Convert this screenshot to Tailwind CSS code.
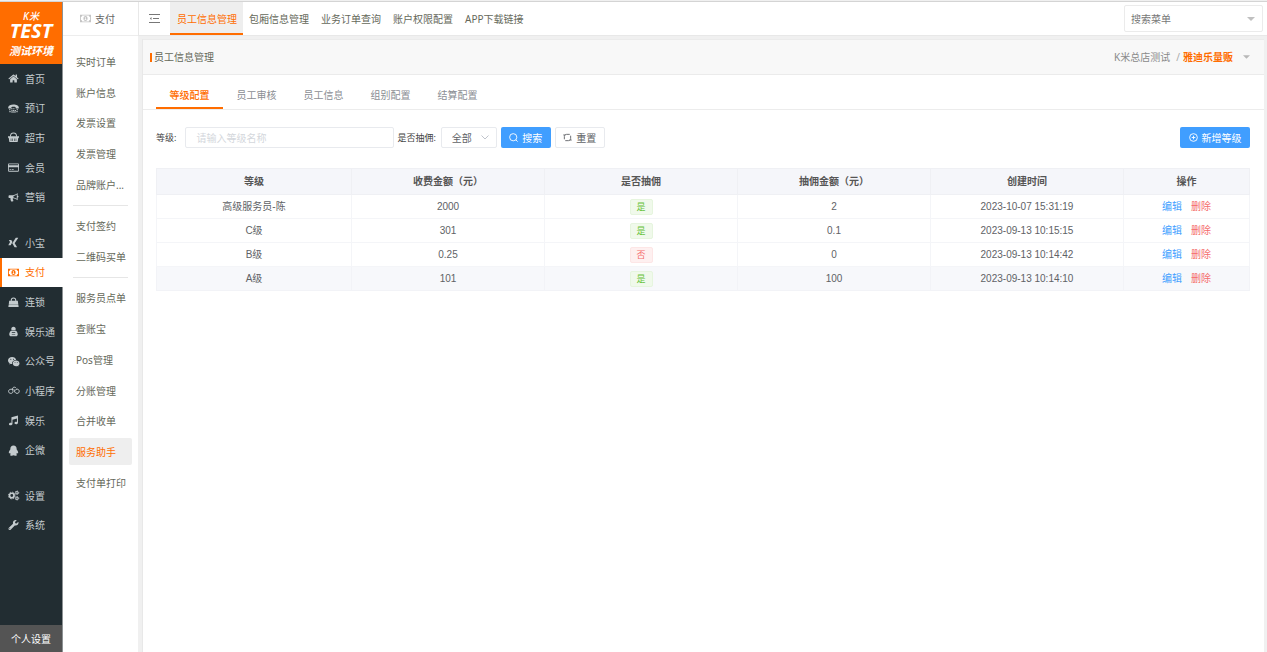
<!DOCTYPE html>
<html lang="zh-CN">
<head>
<meta charset="utf-8">
<meta name="viewport" content="width=device-width, initial-scale=1">
<title>员工信息管理</title>
<script src="https://cdn.jsdelivr.net/npm/@tailwindcss/browser@4"></script>
</head>
<body class="flex min-h-screen flex-col bg-[#f0f0f0] pt-px font-['Noto_Sans','Noto_Sans_CJK_SC',sans-serif] text-[10px] leading-4 text-[#606266]">
<div class="flex flex-1 border-t border-[#d4d4d4]">

  <!-- Primary navigation -->
  <aside class="flex w-[63px] shrink-0 flex-col border-r border-[#8d9294] bg-[#222d32] text-[#c4cbce]">
    <a href="#" class="flex h-[62px] flex-col items-center bg-[#ff6d00] pt-[7px] text-white italic">
      <span class="text-[10px] leading-[14px] font-medium">K米</span>
      <span class="font-['Open_Sans',sans-serif] text-[20px] leading-4 font-bold">TEST</span>
      <span class="pt-1 text-[11px] leading-4 font-bold">测试环境</span>
    </a>
    <nav class="flex flex-col gap-4 whitespace-nowrap">
      <div class="flex h-[148px] flex-col">
        <a href="#" class="flex flex-1 items-center gap-1.5 pl-2"><svg class="h-[9px] w-[11px] shrink-0" viewBox="0 0 576 512" fill="currentColor"><path d="M280.37 148.26L96 300.11V464a16 16 0 0 0 16 16l112.06-.29a16 16 0 0 0 15.92-16V368a16 16 0 0 1 16-16h64a16 16 0 0 1 16 16v95.64a16 16 0 0 0 16 16.05L464 480a16 16 0 0 0 16-16V300L295.67 148.26a12.19 12.19 0 0 0-15.3 0zM571.6 251.47L488 182.56V44.05a12 12 0 0 0-12-12h-56a12 12 0 0 0-12 12v72.61L318.47 43a48 48 0 0 0-61 0L4.34 251.47a12 12 0 0 0-1.6 16.9l25.5 31A12 12 0 0 0 45.15 301l235.22-193.74a12.19 12.19 0 0 1 15.3 0L530.9 301a12 12 0 0 0 16.9-1.6l25.5-31a12 12 0 0 0-1.7-16.93z"/></svg>首页</a>
        <a href="#" class="flex flex-1 items-center gap-1.5 pl-2"><svg class="h-[11px] w-[11px] shrink-0" viewBox="0 0 16 16" fill="currentColor"><path d="M.3 6.500C.3 3.500 4 2 8 2s7.700 1.500 7.700 4.500v.7c0 .5-.4.8-.8.8h-3c-.5 0-.8-.3-.8-.8v-1C10 5.400 6 5.400 4.900 6.200v1c0 .5-.3.8-.8.8h-3c-.4 0-.8-.3-.8-.8z"/><path d="M1.500 9h2v1.600h-2zM4.600 7.600h2v1.500h-2zM7.600 7.600h1.800v1.500H7.600zM12.500 9h2v1.600h-2zM5 10h1.600v1.500H5zM7.400 10H9v1.500H7.400zM9.800 10h1.700v1.500H9.800zM2 11.500h1.800v2H2zM4.600 12.300h6.800v1.500H4.600zM12.200 11.500H14v2h-1.800z"/></svg>预订</a>
        <a href="#" class="flex flex-1 items-center gap-1.5 pl-2"><svg class="h-[11px] w-[11px] shrink-0" viewBox="0 0 16 16"><path d="M3.500 7C3.500 3 5 1.500 8 1.500S12.500 3 12.500 7" fill="none" stroke="currentColor" stroke-width="1.500"/><path fill="currentColor" fill-rule="evenodd" d="M0 6h16v2.500h-1l-1 6H2l-1-6H0zM4 9.500v3.500h.8V9.500zm2.400 0v3.500h.8V9.500zm2.400 0v3.500h.8V9.500zm2.400 0v3.500h.8V9.500z"/></svg>超市</a>
        <a href="#" class="flex flex-1 items-center gap-1.5 pl-2"><svg class="h-[11px] w-[11px] shrink-0" viewBox="0 0 16 16" fill="currentColor" fill-rule="evenodd"><path d="M1.200 2h13.600c.7 0 1.200.5 1.200 1.200v9.600c0 .7-.5 1.200-1.200 1.200H1.200C.5 14 0 13.500 0 12.800V3.200C0 2.500.5 2 1.200 2zm0 1.200v1.600h13.600V3.200zm0 4.600v5h13.600v-5zM2.300 10.600h2v1.200h-2zm3 0h3v1.200h-3z"/></svg>会员</a>
        <a href="#" class="flex flex-1 items-center gap-1.5 pl-2"><svg class="h-[11px] w-[11px] shrink-0" viewBox="0 0 16 16" fill="currentColor" fill-rule="evenodd"><path d="M14 1.500v4c.8 0 1.300.5 1.300 1.200S14.800 8 14 8v4c-2-1.700-4-2.700-6.500-3-.8.400-.8 1.200-.2 1.800-.4.800 0 1.400 1 2.100-.6 1.200-3 1.300-3.900.5-.5-1.600-1.200-2.800-.7-4.500H2.200C1.400 8.900.8 8.400.8 7.600V6c0-.8.600-1.400 1.400-1.400h4.500c2.700 0 5-1.200 7.300-3.100zm-1.200 2.300C11.200 4.900 9.600 5.500 8 5.700v2.200c1.600.2 3.200.8 4.800 1.900z"/></svg>营销</a>
      </div>
      <div class="flex h-[237px] flex-col">
        <a href="#" class="flex flex-1 items-center gap-1.5 pl-2"><svg class="h-[11px] w-[11px] shrink-0" viewBox="0 0 16 16" fill="currentColor"><path d="M1.600 4.200h2.600c.3 0 .6.200.8.500l1.500 2.700-2.400 4.200c-.2.300-.4.500-.8.500H.9c-.3 0-.4-.3-.3-.5l2.400-4.200-1.600-2.700c-.1-.3 0-.5.2-.5z"/><path d="M11.900 1h2.600c.3 0 .4.300.3.500L9.700 9.100l3.300 5.400c.1.300 0 .5-.3.500h-2.500c-.4 0-.6-.2-.8-.5L6.200 9.100l4.900-7.600c.2-.3.400-.5.800-.5z"/></svg>小宝</a>
        <a href="#" aria-current="page" class="-mr-px flex flex-1 items-center gap-1.5 border-l-2 border-[#ff6d00] bg-white pl-1.5 text-[#ff6d00]"><svg class="h-[11px] w-[11px] shrink-0" viewBox="0 0 16 16" fill="currentColor" fill-rule="evenodd"><path d="M0 2.500h16v11H0zM3.200 3.800c0 1-.8 1.900-1.900 1.900v4.600c1.100 0 1.900.9 1.900 1.900h9.600c0-1 .8-1.900 1.900-1.900V5.700c-1.100 0-1.900-.9-1.900-1.900z"/><path d="M8 4.500c2 0 3 1.600 3 3.500s-1 3.500-3 3.500S5 9.900 5 8s1-3.500 3-3.500zM7.700 6l-1 .8.500.6.300-.2v2h-.8v.8h2.600v-.8h-.8V6z"/></svg>支付</a>
        <a href="#" class="flex flex-1 items-center gap-1.5 pl-2"><svg class="h-[11px] w-[11px] shrink-0" viewBox="0 0 16 16"><path d="M4.700 7V5c0-2 1.300-3.500 3.300-3.500S11.300 3 11.300 5v2" fill="none" stroke="currentColor" stroke-width="1.500"/><path fill="currentColor" d="M1.700 5.500h12.600l.7 5.700H1zM.9 11.700h14.200l.4 3H.5z"/></svg>连锁</a>
        <a href="#" class="flex flex-1 items-center gap-1.5 pl-2"><svg class="h-[11px] w-[11px] shrink-0" viewBox="0 0 16 16" fill="currentColor" fill-rule="evenodd"><path d="M8 1c2 0 3.200 1.400 3.200 3.200 0 .8-.2 1.500-.6 2.100H5.400c-.4-.6-.6-1.300-.6-2.100C4.800 2.400 6 1 8 1zM4.300 6.800h7.400c1.600 1.300 2.500 3.500 2.500 5.200 0 1.800-1 3-2.700 3h-7c-1.700 0-2.700-1.200-2.700-3 0-1.700.9-3.900 2.500-5.200zM5.500 9v1h5V9zm0 2.500v1h5v-1z"/></svg>娱乐通</a>
        <a href="#" class="flex flex-1 items-center gap-1.5 pl-2"><svg class="h-[11px] w-[11px] shrink-0 overflow-visible" viewBox="0 0 16 16" fill="currentColor" fill-rule="evenodd"><path d="M6 1.500c3 0 5.400 1.800 5.800 4.300-3.300 0-5.900 2.200-5.900 5l.1.800c-.8 0-1.400-.1-2.100-.3L1.900 12.300l.6-1.900C1 9.400 0 8 0 6.400 0 3.700 2.700 1.500 6 1.500zM4.100 4a.8.8 0 1 0 0 1.600.8.800 0 0 0 0-1.600zm4 0a.8.8 0 1 0 0 1.600.8.800 0 0 0 0-1.600z"/><path d="M11.800 6.600c2.700 0 4.900 1.900 4.900 4.200 0 1.300-.8 2.400-1.900 3.200l.4 1.400-1.600-.8c-.6.200-1.200.3-1.800.3-2.800 0-4.900-1.900-4.900-4.100 0-2.300 2.100-4.200 4.900-4.200zm-1.600 2.200a.6.6 0 1 0 0 1.300.6.600 0 0 0 0-1.300zm3.200 0a.6.6 0 1 0 0 1.300.6.600 0 0 0 0-1.300z"/></svg>公众号</a>
        <a href="#" class="flex flex-1 items-center gap-1.5 pl-2"><svg class="h-[11px] w-[11px] shrink-0 overflow-visible" viewBox="0 0 16 16" fill="none" stroke="currentColor" stroke-width="1.400"><path d="M8 6.200H4.200C2.300 6.200.8 7.500.8 9.200s1.400 3 3.300 3c2.100 0 3.200-1.400 3.200-3.100 0-1.200-.9-2-.9-3.200 0-1.600 1.300-2.700 2.900-2.700 1.200 0 2 .5 2.600 1.500"/><path d="M9 6.500c.2 3 1.300 5.700 4.200 5.700 1.900 0 3.100-1.300 3.100-3.100s-1.300-3.100-3.100-3.100c-1.400 0-2.300.7-2.500 2"/></svg>小程序</a>
        <a href="#" class="flex flex-1 items-center gap-1.5 pl-2"><svg class="h-[11px] w-[11px] shrink-0" viewBox="0 0 16 16" fill="currentColor"><path d="M5 3.200l9.500-2.500v10.500c0 1.400-1.300 2.200-2.800 2.200S9.400 12.700 9.400 11.700s1-1.900 2.400-1.900c.4 0 .8.100 1.200.3V5L6.500 6.800v6c0 1.400-1.300 2.200-2.800 2.200s-2.300-.7-2.300-1.700 1-1.900 2.400-1.900c.4 0 .8.100 1.200.3z"/></svg>娱乐</a>
        <a href="#" class="flex flex-1 items-center gap-1.5 pl-2"><svg class="h-[11px] w-[11px] shrink-0" viewBox="0 0 16 16" fill="currentColor"><path d="M8 .8c3 0 4.600 2.200 4.600 4.900v1c1.200 1.500 2.200 3 2.200 4.500 0 .8-.2 1.200-.5 1.200-.4 0-.9-.6-1.200-1.100-.2.800-.6 1.500-1.200 2.100.8.300 1.200.7 1.200 1.100 0 .7-1.200 1-2.600 1-1 0-1.900-.2-2.500-.6-.6.400-1.500.6-2.500.6-1.400 0-2.600-.3-2.600-1 0-.4.400-.8 1.200-1.100-.6-.6-1-1.300-1.200-2.100-.3.500-.8 1.100-1.200 1.100-.3 0-.5-.4-.5-1.200 0-1.500 1-3 2.200-4.500v-1C3.400 3 5 .8 8 .8z"/></svg>企微</a>
      </div>
      <div class="flex h-[59px] flex-col">
        <a href="#" class="flex flex-1 items-center gap-1.5 pl-2"><svg class="h-[11px] w-[11px] shrink-0 overflow-visible" viewBox="0 0 16 16" fill="none" stroke="currentColor"><circle cx="5.500" cy="8" r="3.300" stroke-width="2.400"/><circle cx="5.500" cy="8" r="4.900" stroke-width="1.300" stroke-dasharray="2.100 1.750"/><circle cx="13" cy="4" r="1.700" stroke-width="1.500"/><circle cx="13" cy="4" r="2.700" stroke-width="1" stroke-dasharray="1.400 1.430"/><circle cx="13" cy="12" r="1.700" stroke-width="1.500"/><circle cx="13" cy="12" r="2.700" stroke-width="1" stroke-dasharray="1.400 1.430"/></svg>设置</a>
        <a href="#" class="flex flex-1 items-center gap-1.5 pl-2"><svg class="h-[10px] w-[11px] shrink-0" viewBox="0 0 512 512" fill="currentColor"><path d="M507.730 109.100c-2.240-9.030-13.540-12.090-20.120-5.510l-74.360 74.360-67.880-11.310-11.310-67.880 74.360-74.360c6.620-6.620 3.430-17.900-5.660-20.160-47.380-11.740-99.550.91-136.580 37.930-39.640 39.640-50.550 97.100-34.050 147.200L18.740 402.760c-24.990 24.990-24.990 65.510 0 90.500 24.990 24.990 65.510 24.990 90.500 0l213.210-213.210c50.120 16.710 107.470 5.680 147.370-34.220 37.070-37.070 49.700-89.320 37.910-136.730zM64 472c-13.260 0-24-10.750-24-24 0-13.260 10.750-24 24-24s24 10.750 24 24c0 13.250-10.750 24-24 24z"/></svg>系统</a>
      </div>
    </nav>
    <button type="button" class="mt-auto h-[27px] bg-[#545454] text-white">个人设置</button>
  </aside>

  <!-- Secondary navigation -->
  <aside class="flex w-[75px] shrink-0 flex-col bg-white text-[#65685a]">
    <div class="flex h-[34px] items-center gap-1 border-b border-[#ededed] pl-[17px] text-[#666]"><svg class="h-[11px] w-[11px] shrink-0 text-[#c4c4c4]" viewBox="0 0 16 16" fill="currentColor" fill-rule="evenodd"><path d="M0 2.500h16v11H0zM3.200 3.800c0 1-.8 1.900-1.900 1.900v4.600c1.100 0 1.900.9 1.900 1.900h9.600c0-1 .8-1.900 1.900-1.900V5.700c-1.100 0-1.900-.9-1.900-1.900z"/><path d="M8 4.500c2 0 3 1.600 3 3.500s-1 3.500-3 3.500S5 9.900 5 8s1-3.500 3-3.500zM7.700 6l-1 .8.500.6.300-.2v2h-.8v.8h2.600v-.8h-.8V6z"/></svg>支付</div>
    <nav class="flex flex-col px-1.5 pt-[11px] whitespace-nowrap">
      <div class="flex h-[153px] flex-col">
        <a href="#" class="flex flex-1 items-center pl-[7px]">实时订单</a>
        <a href="#" class="flex flex-1 items-center pl-[7px]">账户信息</a>
        <a href="#" class="flex flex-1 items-center pl-[7px]">发票设置</a>
        <a href="#" class="flex flex-1 items-center pl-[7px]">发票管理</a>
        <a href="#" class="flex flex-1 items-center pl-[7px]">品牌账户...</a>
      </div>
      <hr class="mx-1 my-[5px] border-[#e6e6e6]">
      <div class="flex h-[61px] flex-col">
        <a href="#" class="flex flex-1 items-center pl-[7px]">支付签约</a>
        <a href="#" class="flex flex-1 items-center pl-[7px]">二维码买单</a>
      </div>
      <hr class="mx-1 my-[5px] border-[#e6e6e6]">
      <div class="flex h-[215px] flex-col">
        <a href="#" class="flex flex-1 items-center pl-[7px]">服务员点单</a>
        <a href="#" class="flex flex-1 items-center pl-[7px]">查账宝</a>
        <a href="#" class="flex flex-1 items-center pl-[7px]">Pos管理</a>
        <a href="#" class="flex flex-1 items-center pl-[7px]">分账管理</a>
        <a href="#" class="flex flex-1 items-center pl-[7px]">合并收单</a>
        <a href="#" aria-current="page" class="flex flex-1 items-center text-[#ff6d00]"><span class="flex h-[27px] flex-1 items-center rounded-xs bg-[#eee] pl-[7px]">服务助手</span></a>
        <a href="#" class="flex flex-1 items-center pl-[7px]">支付单打印</a>
      </div>
    </nav>
  </aside>

  <div class="flex min-w-0 flex-1 flex-col">
    <!-- Page tabs and menu search -->
    <header class="flex h-[34px] shrink-0 items-stretch border-b border-l border-[#e8e8e8] bg-white pr-1 text-[#65685a]">
      <button type="button" aria-label="收起菜单" class="flex w-[31px] items-center justify-center text-[#777]"><svg class="h-[11px] w-[11px]" viewBox="0 0 11 11" fill="none" stroke="currentColor"><path d="M0 1.500h11M4 5.500h6M0 9.500h11"/><path d="M2.500 4v3L.8 5.500z" fill="currentColor" stroke="none"/></svg></button>
      <nav class="flex whitespace-nowrap">
        <a href="#" aria-current="page" class="flex items-center border-b-2 border-[#ff6d00] bg-[#eee] pt-0.5 pr-1.5 pl-[7px] text-[#ff6d00]">员工信息管理</a>
        <a href="#" class="flex items-center px-1.5">包厢信息管理</a>
        <a href="#" class="flex items-center px-1.5">业务订单查询</a>
        <a href="#" class="flex items-center px-1.5">账户权限配置</a>
        <a href="#" class="flex items-center px-1.5">APP下载链接</a>
      </nav>
      <label class="relative ml-auto flex w-[139px] items-center py-[3px]">
        <select aria-label="搜索菜单" class="h-full w-full appearance-none rounded-xs border border-[#ebebeb] bg-white pl-1.5 text-[#777]"><option>搜索菜单</option></select>
        <svg class="pointer-events-none absolute right-2 h-1 w-2 text-[#c0c0c0]" viewBox="0 0 8 4" fill="currentColor"><path d="M0 0h8L4 4z"/></svg>
      </label>
    </header>

    <main class="mt-[3px] mr-[3px] ml-1 flex flex-1 flex-col border-l border-[#e8e8e8] bg-white">
      <div class="flex h-9 items-center border-y border-[#ebebeb] bg-[#f8f8f8] pr-3.5 pl-[7px]">
        <h1 class="flex items-center gap-0.5 text-[#65685a]"><span class="h-[9px] w-0.5 bg-[#ff6d00]"></span>员工信息管理</h1>
        <div class="ml-auto flex items-center text-[#8a8a8a]">
          <span>K米总店测试</span><span class="mr-[3px] ml-1.5 text-[#aaa]">/</span><span class="font-bold text-[#ff6d00]">雅迪乐量贩</span>
          <button type="button" aria-label="切换门店" class="ml-2.5"><svg class="h-1 w-[7px] text-[#b8b8b8]" viewBox="0 0 8 4" fill="currentColor"><path d="M0 0h8L4 4z"/></svg></button>
        </div>
      </div>

      <nav class="flex h-[35px] border-b border-[#ececec] pl-[13px] text-[#8b8e94]">
        <a href="#" aria-current="page" class="flex w-[67px] items-center justify-center border-b-2 border-[#ff6d00] pt-[7px] font-medium text-[#ff6d00]">等级配置</a>
        <a href="#" class="flex w-[67px] items-center justify-center pt-[5px]">员工审核</a>
        <a href="#" class="flex w-[67px] items-center justify-center pt-[5px]">员工信息</a>
        <a href="#" class="flex w-[67px] items-center justify-center pt-[5px]">组别配置</a>
        <a href="#" class="flex w-[67px] items-center justify-center pt-[5px]">结算配置</a>
      </nav>

      <form class="flex items-center gap-1 px-[13px] pt-[17px] pr-3.5">
        <label for="level" class="mr-[5px] text-[9px] text-[#444]">等级:</label>
        <input id="level" type="text" placeholder="请输入等级名称" class="h-[21px] w-[209px] rounded-xs border border-[#e8eaee] px-2.5 placeholder:text-[#d4d7dc]">
        <label for="commission" class="mr-px -ml-px text-[9px] text-[#444]">是否抽佣:</label>
        <div class="relative flex items-center">
          <select id="commission" class="h-[21px] w-[56px] appearance-none rounded-xs border border-[#e8eaee] bg-white pl-2.5"><option>全部</option><option>是</option><option>否</option></select>
          <svg class="pointer-events-none absolute right-2 h-[5px] w-2 text-[#c0c4cc]" viewBox="0 0 8 5" fill="none" stroke="currentColor"><path d="M.5.500L4 4 7.500.500"/></svg>
        </div>
        <button type="button" class="flex h-[21px] w-[50px] items-center justify-center gap-1 rounded-xs bg-[#409eff] text-white"><svg class="h-[9px] w-[9px]" viewBox="0 0 10 10" fill="none" stroke="currentColor"><circle cx="4.700" cy="4.700" r="4"/><path d="M7.600 7.600l2 2"/></svg>搜索</button>
        <button type="button" class="flex h-[21px] w-[50px] items-center justify-center gap-1 rounded-xs border border-[#e8eaee]"><svg class="h-[9px] w-[9px]" viewBox="0 0 10 10" fill="none" stroke="currentColor"><path d="M1.500 7V4C1.500 2.500 2.500 1.500 4 1.500h3.500M.3 2.200h2.500M8.500 3v3c0 1.500-1 2.500-2.500 2.500H2.500M7.200 7.800h2.500"/></svg>重置</button>
        <button type="button" class="ml-auto flex h-[21px] w-[70px] items-center justify-center gap-1 rounded-xs bg-[#409eff] text-white"><svg class="h-[9px] w-[9px]" viewBox="0 0 10 10" fill="none" stroke="currentColor"><circle cx="5" cy="5" r="4.300"/><path d="M5 3v4M3 5h4"/></svg>新增等级</button>
      </form>

      <div class="pt-5 pr-3.5 pl-[13px]">
        <table class="w-full table-fixed border-collapse border border-[#f2f3f7] text-center font-['Liberation_Sans','Noto_Sans_CJK_SC',sans-serif] leading-4">
          <colgroup><col class="w-[195px]"><col><col><col><col><col class="w-[126px]"></colgroup>
          <thead>
            <tr class="h-[26px] bg-[#f5f6fa] text-[#555]">
              <th class="border border-[#eff0f4]">等级</th><th class="border border-[#eff0f4]">收费金额（元）</th><th class="border border-[#eff0f4]">是否抽佣</th><th class="border border-[#eff0f4]">抽佣金额（元）</th><th class="border border-[#eff0f4]">创建时间</th><th class="border border-[#eff0f4]">操作</th>
            </tr>
          </thead>
          <tbody>
            <tr class="h-6">
              <td class="border border-[#f4f5f8]">高级服务员-陈</td><td class="border border-[#f4f5f8]">2000</td>
              <td class="border border-[#f4f5f8]"><span class="mx-auto block w-[23px] rounded-xs border border-[#e6f5de] bg-[#f0f9eb] text-[9px] leading-[14px] text-[#67c23a]">是</span></td>
              <td class="border border-[#f4f5f8]">2</td><td class="border border-[#f4f5f8]">2023-10-07 15:31:19</td>
              <td class="border border-[#f4f5f8]"><div class="flex justify-center gap-[9px]"><a href="#" class="text-[#409eff]">编辑</a><a href="#" class="text-[#f56c6c]">删除</a></div></td>
            </tr>
            <tr class="h-6">
              <td class="border border-[#f4f5f8]">C级</td><td class="border border-[#f4f5f8]">301</td>
              <td class="border border-[#f4f5f8]"><span class="mx-auto block w-[23px] rounded-xs border border-[#e6f5de] bg-[#f0f9eb] text-[9px] leading-[14px] text-[#67c23a]">是</span></td>
              <td class="border border-[#f4f5f8]">0.1</td><td class="border border-[#f4f5f8]">2023-09-13 10:15:15</td>
              <td class="border border-[#f4f5f8]"><div class="flex justify-center gap-[9px]"><a href="#" class="text-[#409eff]">编辑</a><a href="#" class="text-[#f56c6c]">删除</a></div></td>
            </tr>
            <tr class="h-6">
              <td class="border border-[#f4f5f8]">B级</td><td class="border border-[#f4f5f8]">0.25</td>
              <td class="border border-[#f4f5f8]"><span class="mx-auto block w-[23px] rounded-xs border border-[#fde6e6] bg-[#fef0f0] text-[9px] leading-[14px] text-[#f56c6c]">否</span></td>
              <td class="border border-[#f4f5f8]">0</td><td class="border border-[#f4f5f8]">2023-09-13 10:14:42</td>
              <td class="border border-[#f4f5f8]"><div class="flex justify-center gap-[9px]"><a href="#" class="text-[#409eff]">编辑</a><a href="#" class="text-[#f56c6c]">删除</a></div></td>
            </tr>
            <tr class="h-6 bg-[#f7f8fb]">
              <td class="border border-[#f2f3f7]">A级</td><td class="border border-[#f2f3f7]">101</td>
              <td class="border border-[#f2f3f7]"><span class="mx-auto block w-[23px] rounded-xs border border-[#e6f5de] bg-[#f0f9eb] text-[9px] leading-[14px] text-[#67c23a]">是</span></td>
              <td class="border border-[#f2f3f7]">100</td><td class="border border-[#f2f3f7]">2023-09-13 10:14:10</td>
              <td class="border border-[#f2f3f7]"><div class="flex justify-center gap-[9px]"><a href="#" class="text-[#409eff]">编辑</a><a href="#" class="text-[#f56c6c]">删除</a></div></td>
            </tr>
          </tbody>
        </table>
      </div>
    </main>
  </div>
</div>
</body>
</html>
